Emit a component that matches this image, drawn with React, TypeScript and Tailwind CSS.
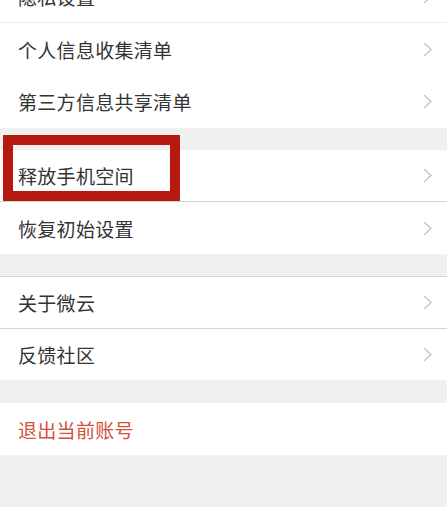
import React from "react";

const Chevron = () => (
  <svg width="10" height="15" viewBox="0 0 10 15" fill="none" className="shrink-0">
    <path d="M1.5 1.5 L8 7.5 L1.5 13.5" stroke="#c4c4c4" strokeWidth="1.4" strokeLinecap="round" strokeLinejoin="round" />
  </svg>
);

const Row = ({ label, h, chevron = true, red = false, border = false }: { label: string; h: string; chevron?: boolean; red?: boolean; border?: boolean }) => (
  <div className={`${h} ${border ? "border-t border-[#d4d4d4]" : ""} bg-white flex items-center justify-between pl-[18px] pr-[14px]`}>
    <span className={`text-[19px] leading-none tracking-[0.3px] ${red ? "text-[#d4503c]" : "text-[#333333]"}`}>{label}</span>
    {chevron && <Chevron />}
  </div>
);

export default function App() {
  return (
    <div
      className="w-[447px] h-[507px] overflow-hidden bg-[#f0f0f0]"
      style={{ fontFamily: '"Noto Sans CJK SC", "Noto Sans", sans-serif' }}
    >
      <div className="-mt-[30px]">
        <Row label="隐私设置" h="h-[52px]" />
        <div className="h-[1px] bg-[#ebebeb]" />
        <Row label="个人信息收集清单" h="h-[52px]" />
        <Row label="第三方信息共享清单" h="h-[53px]" />
        <div className="h-[22px]" />
        <div className="relative">
          <Row label="释放手机空间" h="h-[51px]" />
          <div className="absolute left-[3px] top-[-15px] w-[177px] h-[66px] border-[10px] border-[#b5190f] pointer-events-none" />
        </div>
        <Row label="恢复初始设置" h="h-[53px]" border />
        <div className="h-[22px]" />
        <Row label="关于微云" h="h-[52px]" border />
        <Row label="反馈社区" h="h-[52px]" border />
        <div className="h-[23px]" />
        <Row label="退出当前账号" h="h-[52px]" chevron={false} red />
      </div>
    </div>
  );
}
